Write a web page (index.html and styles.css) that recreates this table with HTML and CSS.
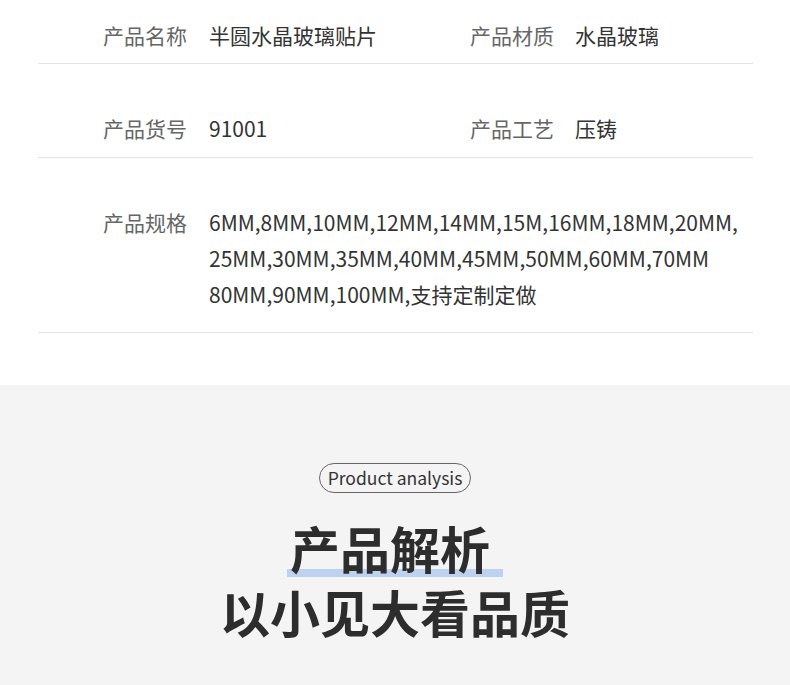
FILE: index.html
```html
<!DOCTYPE html>
<html lang="zh-CN">
<head>
    <meta charset="UTF-8">
    <meta name="viewport" content="width=device-width, initial-scale=1.0">
    <title>产品参数</title>
    <link rel="stylesheet" href="styles.css">
</head>
<body>

<div class="specs">
    <div class="spec-row">
        <span class="label">产品名称</span>
        <span class="value">半圆水晶玻璃贴片</span>
        <span class="label">产品材质</span>
        <span class="value">水晶玻璃</span>
    </div>
    <div class="spec-row">
        <span class="label">产品货号</span>
        <span class="value">91001</span>
        <span class="label">产品工艺</span>
        <span class="value">压铸</span>
    </div>
    <div class="spec-row spec-wide">
        <span class="label">产品规格</span>
        <span class="value">6MM,8MM,10MM,12MM,14MM,15M,16MM,18MM,20MM,<br>25MM,30MM,35MM,40MM,45MM,50MM,60MM,70MM<br>80MM,90MM,100MM,支持定制定做</span>
    </div>
</div>

<section class="analysis">
    <div class="pill">Product analysis</div>
    <h2 class="title">
        <span class="title-mark">产品解析</span><br>
        以小见大看品质
    </h2>
</section>

</body>
</html>
```

FILE: styles.css
```css
body {
    font-family: "Noto Sans CJK SC", "Noto Sans", sans-serif;
    margin: 0;
    padding: 0;
    background-color: #fff;
    color: #333;
}
.specs {
    margin: 0 37px 0 38px;
    height: 385px;
}
.spec-row {
    display: grid;
    grid-template-columns: 106px 261px 105px 1fr;
    padding: 46px 0 11px 65px;
    border-bottom: 1px solid #e3e3e3;
    font-size: 21px;
    line-height: 36px;
}
.spec-row:first-child {
    padding-top: 17px;
    padding-bottom: 10px;
}
.spec-wide {
    grid-template-columns: 106px 1fr;
    padding-bottom: 20px;
}
.label {
    color: #666;
}
.value {
    color: #333;
}
.analysis {
    background-color: #f4f4f4;
    height: 300px;
    text-align: center;
    padding-top: 78px;
    box-sizing: border-box;
}
.pill {
    display: inline-block;
    border: 1px solid #666;
    border-radius: 15px;
    padding: 0 8px;
    height: 28px;
    line-height: 27px;
    font-size: 17.5px;
    color: #333;
}
.title {
    margin: 22px 0 0;
    font-size: 50px;
    font-weight: bold;
    line-height: 64px;
    color: #2d2d2d;
}
.title-mark {
    position: relative;
    z-index: 0;
    padding-right: 10px;
}
.title-mark::after {
    content: "";
    position: absolute;
    left: -3px;
    right: -3px;
    bottom: 6px;
    height: 8px;
    background-color: #bcd2ee;
    z-index: -1;
}
```
